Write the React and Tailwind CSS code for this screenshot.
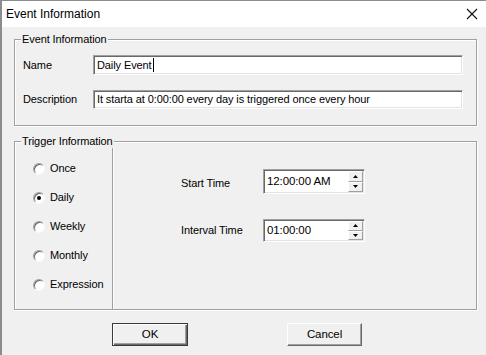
import React from "react";

function Radio({ label, checked }) {
  return (
    <div className="h-[29px] flex items-center">
      <div className="w-[12px] h-[12px] rounded-full border border-t-[#a0a0a0] border-l-[#a0a0a0] border-r-[#f8f8f8] border-b-[#f8f8f8] bg-white flex items-center justify-center shadow-[inset_1px_1px_0_#696969]">
        {checked && <div className="w-[4px] h-[4px] rounded-full bg-black" />}
      </div>
      <span className="ml-[5px]">{label}</span>
    </div>
  );
}

function Sunken({ className, children }) {
  return (
    <div
      className={
        "bg-white border border-t-[#a0a0a0] border-l-[#a0a0a0] border-r-white border-b-white shadow-[inset_1px_1px_0_#696969,inset_-1px_-1px_0_#e3e3e3] " +
        className
      }
    >
      {children}
    </div>
  );
}

function Spin({ value, h }) {
  return (
    <Sunken className={"w-[102px] flex items-stretch " + h}>
      <div className="flex-1 flex items-center pl-[3px] text-[11.5px]">{value}</div>
      <div className="w-[16px] flex flex-col py-[1px] pr-[1px]">
        <div className="flex-1 bg-[#f0f0f0] border-t border-l border-white border-b border-r border-b-[#a0a0a0] border-r-[#a0a0a0] flex items-center justify-center">
          <svg width="5" height="3" viewBox="0 0 5 3"><path d="M2.5 0 L5 3 L0 3 Z" fill="#000" /></svg>
        </div>
        <div className="flex-1 bg-[#f0f0f0] border-t border-l border-white border-b border-r border-b-[#a0a0a0] border-r-[#a0a0a0] flex items-center justify-center">
          <svg width="5" height="3" viewBox="0 0 5 3"><path d="M0 0 L5 0 L2.5 3 Z" fill="#000" /></svg>
        </div>
      </div>
    </Sunken>
  );
}

export default function App() {
  return (
    <div className="w-[486px] h-[355px] overflow-hidden bg-[#f0f0f0] border-l-2 border-t border-l-[#8c8c8c] border-t-[#8c8c8c] font-['Liberation_Sans',Arial,sans-serif] text-[11px] tracking-[-0.1px] text-black flex flex-col">
      {/* Title bar */}
      <div className="h-[26px] bg-white flex items-center justify-between pl-[4px] pr-[6px] shrink-0">
        <span className="text-[12px] tracking-normal">Event Information</span>
        <svg width="12" height="12" viewBox="0 0 12 12" className="mr-[2px]">
          <path d="M1 1 L11 11 M11 1 L1 11" stroke="#111" strokeWidth="1.1" />
        </svg>
      </div>

      {/* Event information group */}
      <div className="relative ml-[12px] mt-[12px] w-[463px] h-[87px] border border-[#a0a0a0] shadow-[inset_1px_1px_0_#ffffff,1px_1px_0_#ffffff] shrink-0">
        <span className="absolute left-[6px] top-[-8px] px-[1px] bg-[#f0f0f0] leading-[14px]">Event Information</span>
        <div className="flex items-center mt-[15px]">
          <span className="w-[78px] pl-[8px]">Name</span>
          <Sunken className="w-[370px] h-[20px] flex items-center pl-[3px]">
            <span>Daily Event</span>
            <span className="inline-block w-[1px] h-[14px] bg-black ml-[1px]" />
          </Sunken>
        </div>
        <div className="flex items-center mt-[15px]">
          <span className="w-[78px] pl-[8px]">Description</span>
          <Sunken className="w-[370px] h-[19px] flex items-center pl-[3px]">
            <span>It starta at 0:00:00 every day is triggered once every hour</span>
          </Sunken>
        </div>
      </div>

      {/* Trigger information group */}
      <div className="relative ml-[12px] mt-[15px] w-[463px] h-[169px] border border-[#a0a0a0] shadow-[1px_1px_0_#ffffff] flex shrink-0">
        <span className="absolute left-[6px] top-[-8px] px-[1px] bg-[#f0f0f0] leading-[14px] z-10">Trigger Information</span>
        <div className="w-[97px] pt-[12px] pl-[18px] shadow-[inset_1px_1px_0_#ffffff]">
          <Radio label="Once" />
          <Radio label="Daily" checked />
          <Radio label="Weekly" />
          <Radio label="Monthly" />
          <Radio label="Expression" />
        </div>
        <div className="flex-1 border-l border-[#a0a0a0] shadow-[inset_1px_1px_0_#ffffff] pt-[27px]">
          <div className="flex items-center">
            <span className="w-[150px] pl-[68px] pt-[4px]">Start Time</span>
            <Spin value="12:00:00 AM" h="h-[25px]" />
          </div>
          <div className="flex items-center mt-[25px]">
            <span className="w-[150px] pl-[68px]">Interval Time</span>
            <Spin value="01:00:00" h="h-[23px]" />
          </div>
        </div>
      </div>

      {/* Buttons */}
      <div className="flex mt-[13px] pl-[110px]">
        <div className="w-[76px] h-[23px] border border-[#3a3a3a] bg-[#f0f0f0] shadow-[inset_1px_1px_0_#ffffff,inset_-1px_-1px_0_#696969,inset_-2px_-2px_0_#a0a0a0] flex items-center justify-center text-[11.5px]">
          OK
        </div>
        <div className="ml-[99px] w-[75px] h-[23px] border border-t-white border-l-white border-r-[#696969] border-b-[#696969] bg-[#f0f0f0] shadow-[inset_-1px_-1px_0_#a0a0a0] flex items-center justify-center text-[11.5px]">
          Cancel
        </div>
      </div>
    </div>
  );
}
